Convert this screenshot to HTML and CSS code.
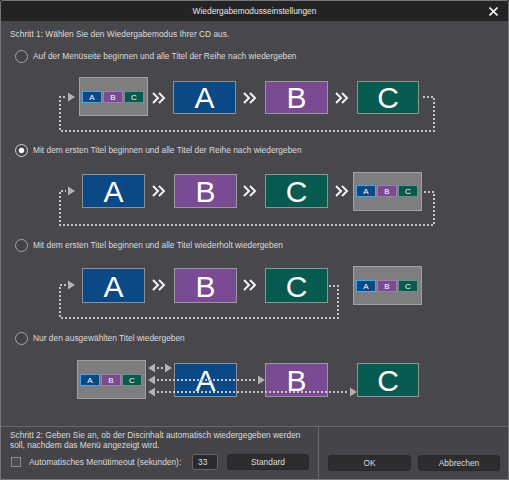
FILE: index.html
```html
<!DOCTYPE html>
<html lang="de">
<head>
<meta charset="utf-8">
<title>Wiedergabemodusseinstellungen</title>
<link rel="stylesheet" href="styles.css">
</head>
<body>
<div class="dialog">
  <div class="titlebar">
    <span></span>
    <span class="title">Wiedergabemodusseinstellungen</span>
    <svg class="close" width="9" height="9" viewBox="0 0 9 9"><path d="M0.5 0.5 L8.5 8.5 M8.5 0.5 L0.5 8.5" stroke="#f2f2f2" stroke-width="1.6" fill="none"/></svg>
  </div>

  <div class="content">
    <div class="step">Schritt 1: Wählen Sie den Wiedergabemodus Ihrer CD aus.</div>

    <div class="option">
      <div class="radio-row"><span class="radio"></span><span>Auf der Menüseite beginnen und alle Titel der Reihe nach wiedergeben</span></div>
      <svg class="diagram" width="508" height="76" viewBox="1 65 508 76">
        <rect class="menu" x="79.5" y="77.5" width="68" height="38"/>
        <rect class="sa" x="82.5" y="91.5" width="19" height="11"/>
        <rect class="sb" x="103.5" y="91.5" width="19" height="11"/>
        <rect class="sc" x="124.5" y="91.5" width="19" height="11"/>
        <text class="small" x="92" y="100">A</text>
        <text class="small" x="113" y="100">B</text>
        <text class="small" x="134" y="100">C</text>
        <path class="chev" d="M153 93 L158 98 L153 103 M159 93 L164 98 L159 103"/>
        <rect class="ba" x="173.5" y="81.5" width="62" height="32"/>
        <text class="big" x="204.5" y="108">A</text>
        <path class="chev" d="M244 93 L249 98 L244 103 M250 93 L255 98 L250 103"/>
        <rect class="bb" x="265.5" y="81.5" width="62" height="32"/>
        <text class="big" x="296.5" y="108">B</text>
        <path class="chev" d="M336 93 L341 98 L336 103 M342 93 L347 98 L342 103"/>
        <rect class="bc" x="357.5" y="81.5" width="61" height="32"/>
        <text class="big" x="388" y="108">C</text>
        <path class="dots" d="M423 97 H434 V131 H60 V97 H66"/>
        <polygon class="head" points="68,92.5 75,97 68,101.5"/>
      </svg>
    </div>

    <div class="option">
      <div class="radio-row"><span class="radio checked"></span><span>Mit dem ersten Titel beginnen und alle Titel der Reihe nach wiedergeben</span></div>
      <svg class="diagram" width="508" height="77" viewBox="1 159 508 77">
        <rect class="ba" x="82.5" y="174.5" width="62" height="33"/>
        <text class="big" x="113.5" y="202">A</text>
        <path class="chev" d="M153 186 L158 191 L153 196 M159 186 L164 191 L159 196"/>
        <rect class="bb" x="174.5" y="174.5" width="62" height="33"/>
        <text class="big" x="205.5" y="202">B</text>
        <path class="chev" d="M244 186 L249 191 L244 196 M250 186 L255 191 L250 196"/>
        <rect class="bc" x="265.5" y="174.5" width="62" height="33"/>
        <text class="big" x="296.5" y="202">C</text>
        <path class="chev" d="M336 186 L341 191 L336 196 M342 186 L347 191 L342 196"/>
        <rect class="menu" x="353.5" y="172.5" width="68" height="38"/>
        <rect class="sa" x="356.5" y="185.5" width="19" height="11"/>
        <rect class="sb" x="377.5" y="185.5" width="19" height="11"/>
        <rect class="sc" x="398.5" y="185.5" width="19" height="11"/>
        <text class="small" x="366" y="194">A</text>
        <text class="small" x="387" y="194">B</text>
        <text class="small" x="408" y="194">C</text>
        <path class="dots" d="M424 192 H434 V225 H60 V191 H66"/>
        <polygon class="head" points="68,186.5 75,191 68,195.5"/>
      </svg>
    </div>

    <div class="option">
      <div class="radio-row"><span class="radio"></span><span>Mit dem ersten Titel beginnen und alle Titel wiederholt wiedergeben</span></div>
      <svg class="diagram" width="508" height="75" viewBox="1 254 508 75">
        <rect class="ba" x="82.5" y="268.5" width="62" height="34"/>
        <text class="big" x="113.5" y="296.5">A</text>
        <path class="chev" d="M153 280 L158 285 L153 290 M159 280 L164 285 L159 290"/>
        <rect class="bb" x="174.5" y="268.5" width="62" height="34"/>
        <text class="big" x="205.5" y="296.5">B</text>
        <path class="chev" d="M244 280 L249 285 L244 290 M250 280 L255 285 L250 290"/>
        <rect class="bc" x="265.5" y="268.5" width="62" height="34"/>
        <text class="big" x="296.5" y="296.5">C</text>
        <rect class="menu" x="353.5" y="266.5" width="68" height="38"/>
        <rect class="sa" x="356.5" y="280.5" width="19" height="11"/>
        <rect class="sb" x="377.5" y="280.5" width="19" height="11"/>
        <rect class="sc" x="398.5" y="280.5" width="19" height="11"/>
        <text class="small" x="366" y="289">A</text>
        <text class="small" x="387" y="289">B</text>
        <text class="small" x="408" y="289">C</text>
        <path class="dots" d="M329 286 H338 V318 H60 V285 H66"/>
        <polygon class="head" points="68,280.5 75,285 68,289.5"/>
      </svg>
    </div>

    <div class="option">
      <div class="radio-row"><span class="radio"></span><span>Nur den ausgewählten Titel wiedergeben</span></div>
      <svg class="diagram" width="508" height="73" viewBox="1 347 508 73">
        <rect class="menu" x="77.5" y="360.5" width="68" height="38"/>
        <rect class="sa" x="80.5" y="374.5" width="19" height="11"/>
        <rect class="sb" x="101.5" y="374.5" width="19" height="11"/>
        <rect class="sc" x="122.5" y="374.5" width="19" height="11"/>
        <text class="small" x="90" y="383">A</text>
        <text class="small" x="111" y="383">B</text>
        <text class="small" x="132" y="383">C</text>
        <rect class="ba" x="174.5" y="363.5" width="62" height="33"/>
        <text class="big" x="205.5" y="391">A</text>
        <rect class="bb" x="265.5" y="363.5" width="62" height="33"/>
        <text class="big" x="296.5" y="391">B</text>
        <rect class="bc" x="357.5" y="363.5" width="61" height="33"/>
        <text class="big" x="388" y="391">C</text>
        <polygon class="head" points="148,368 155,363.5 155,372.5"/>
        <path class="dots" d="M157 368 H164"/>
        <polygon class="head" points="165,363.5 172,368 165,372.5"/>
        <polygon class="head" points="148,380 155,375.5 155,384.5"/>
        <path class="dots" d="M157 380 H257"/>
        <polygon class="head" points="258,375.5 265,380 258,384.5"/>
        <polygon class="head" points="148,392 155,387.5 155,396.5"/>
        <path class="dots" d="M157 392 H349"/>
        <polygon class="head" points="350,387.5 357,392 350,396.5"/>
      </svg>
    </div>
  </div>

  <div class="footer">
    <div class="footer-left">
      <p class="step2">Schritt 2: Geben Sie an, ob der Discinhalt automatisch wiedergegeben werden<br>soll, nachdem das Menü angezeigt wird.</p>
      <div class="timeout-row">
        <span class="checkbox"></span>
        <span class="timeout-label">Automatisches Menütimeout (sekunden):</span>
        <span class="input">33</span>
        <button class="btn btn-standard">Standard</button>
      </div>
    </div>
    <div class="footer-right">
      <button class="btn btn-ok">OK</button>
      <button class="btn btn-cancel">Abbrechen</button>
    </div>
  </div>
</div>
</body>
</html>
```

FILE: styles.css
```css
* { box-sizing: border-box; }

html, body {
  margin: 0;
  padding: 0;
  background: #2a2a2c;
}

body {
  font-family: "Liberation Sans", Arial, sans-serif;
  font-size: 8.4px;
  color: #dcdcdc;
}

.dialog {
  width: 509px;
  height: 480px;
  border: 1px solid #77767a;
  border-radius: 3px 3px 0 0;
  background: #48474b;
  display: flex;
  flex-direction: column;
  overflow: hidden;
}

.titlebar {
  height: 20px;
  background: #232324;
  display: grid;
  grid-template-columns: 1fr auto 1fr;
  align-items: center;
}

.title {
  color: #e8e8e8;
  line-height: 20px;
}

.close {
  justify-self: end;
  margin-right: 10px;
  display: block;
}

.content {
  flex: 1;
  padding-top: 6px;
}

.step {
  padding-left: 9px;
  line-height: 14px;
  height: 14px;
  margin-bottom: 6px;
}

.radio-row {
  height: 18px;
  display: flex;
  align-items: center;
  gap: 5px;
  padding-left: 14px;
  line-height: 12px;
}

.radio {
  width: 13px;
  height: 13px;
  border-radius: 50%;
  border: 1px solid #a6a5a9;
  background: #444347;
  flex: none;
}

.radio.checked {
  border-color: #d4d4d6;
  background: radial-gradient(circle at center, #ffffff 0, #f2f2f2 2.3px, #444347 3.2px);
}

.diagram {
  display: block;
}

.diagram .menu { fill: #7e7e80; stroke: #a2a2a4; stroke-width: 1; }
.diagram .sa { fill: #0b4886; stroke: #46a6e6; stroke-width: 1; }
.diagram .sb { fill: #7a4a92; stroke: #9c82aa; stroke-width: 1; }
.diagram .sc { fill: #075a50; stroke: #6f8f8b; stroke-width: 1; }
.diagram .ba { fill: #0b4886; stroke: #8e9099; stroke-width: 1; }
.diagram .bb { fill: #7a4a92; stroke: #9a97a0; stroke-width: 1; }
.diagram .bc { fill: #075a50; stroke: #8b9594; stroke-width: 1; }

.diagram .small {
  font-family: "Liberation Sans", Arial, sans-serif;
  font-size: 8px;
  fill: #ffffff;
  text-anchor: middle;
}

.diagram .big {
  font-family: "Liberation Sans", Arial, sans-serif;
  font-size: 30px;
  fill: #ffffff;
  text-anchor: middle;
}

.diagram .chev {
  fill: none;
  stroke: #f4f4f4;
  stroke-width: 2;
}

.diagram .dots {
  fill: none;
  stroke: #c4c4c6;
  stroke-width: 2;
  stroke-dasharray: 2 2;
}

.diagram .head {
  fill: #b2b2b4;
}

.footer {
  height: 53px;
  border-top: 1px solid #69686c;
  display: flex;
  background: #454448;
}

.footer-left {
  width: 318px;
  border-right: 1px solid #69686c;
  padding: 3px 0 0 9px;
}

.step2 {
  margin: 0;
  line-height: 10px;
}

.timeout-row {
  margin-top: 4px;
  height: 16px;
  display: flex;
  align-items: center;
}

.checkbox {
  width: 10px;
  height: 10px;
  margin-left: 1px;
  border: 1px solid #8c8b8f;
  background: #4a494d;
  flex: none;
}

.timeout-label {
  width: 171px;
  padding-left: 8px;
  flex: none;
}

.input {
  width: 26px;
  height: 16px;
  border: 1px solid #66656a;
  border-radius: 2px;
  background: #2b2b2d;
  padding-left: 5px;
  line-height: 14px;
  flex: none;
}

.btn {
  font-family: "Liberation Sans", Arial, sans-serif;
  font-size: 8.4px;
  color: #dedede;
  background: #2d2d2f;
  border: 1px solid #29292b;
  border-radius: 3px;
  height: 16px;
  padding: 0;
  line-height: 14px;
}

.btn-standard {
  width: 82px;
  margin-left: 9px;
}

.footer-right {
  flex: 1;
  display: flex;
  align-items: flex-end;
  gap: 7px;
  padding: 0 0 8px 9px;
}

.btn-ok { width: 83px; }
.btn-cancel { width: 82px; }
```
